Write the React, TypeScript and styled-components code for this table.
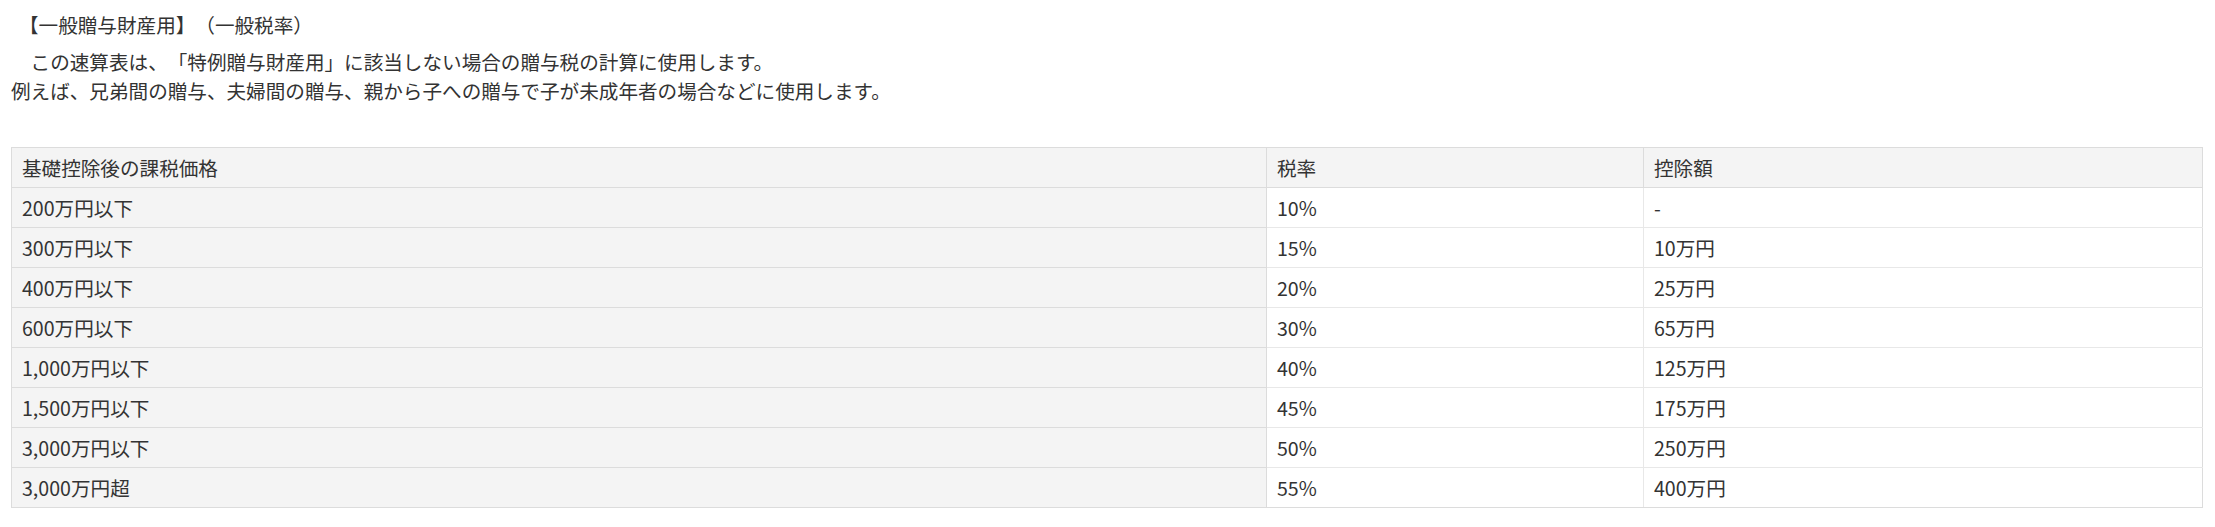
import styled, { createGlobalStyle } from "styled-components";

const GlobalStyle = createGlobalStyle`
  html, body {
    margin: 0;
    padding: 0;
    background: #ffffff;
  }
  body {
    font-family: "Noto Sans CJK JP", "Noto Sans", sans-serif;
    color: #333333;
    text-spacing-trim: space-all;
  }
`;

const Page = styled.div`
  padding: 10px 12px 0 11px;
  font-size: 19.6px;
`;

const Heading = styled.div`
  line-height: 29px;
  padding-left: 8px;
  margin-bottom: 9px;
`;

const Lead = styled.p`
  margin: 0 0 42px 0;
  line-height: 28.5px;
`;

const Table = styled.table`
  width: 100%;
  table-layout: fixed;
  border-collapse: collapse;
  font-size: 19.6px;
`;

const HeadCell = styled.th<{ $width?: string }>`
  width: ${(props) => props.$width || "auto"};
  background-color: #f4f4f4;
  border: 1px solid #dcdcdc;
  padding: 7px 10px;
  line-height: 25px;
  text-align: left;
  font-weight: 400;
  color: #333333;
`;

const Cell = styled.td`
  background-color: #ffffff;
  border: 1px solid #e8e8e8;
  padding: 7px 10px;
  line-height: 25px;
  color: #333333;

  &:last-child {
    border-right-color: #dcdcdc;
  }

  tr:last-child > & {
    border-bottom-color: #dcdcdc;
  }
`;

type Bracket = {
  price: string;
  rate: string;
  deduction: string;
};

const brackets: Bracket[] = [
  { price: "200万円以下", rate: "10%", deduction: "-" },
  { price: "300万円以下", rate: "15%", deduction: "10万円" },
  { price: "400万円以下", rate: "20%", deduction: "25万円" },
  { price: "600万円以下", rate: "30%", deduction: "65万円" },
  { price: "1,000万円以下", rate: "40%", deduction: "125万円" },
  { price: "1,500万円以下", rate: "45%", deduction: "175万円" },
  { price: "3,000万円以下", rate: "50%", deduction: "250万円" },
  { price: "3,000万円超", rate: "55%", deduction: "400万円" },
];

const App = () => {
  return (
    <>
      <GlobalStyle />
      <Page>
        <Heading>【一般贈与財産用】（一般税率）</Heading>
        <Lead>
          {"\u3000"}この速算表は、「特例贈与財産用」に該当しない場合の贈与税の計算に使用します。
          <br />
          例えば、兄弟間の贈与、夫婦間の贈与、親から子への贈与で子が未成年者の場合などに使用します。
        </Lead>
        <Table>
          <thead>
            <tr>
              <HeadCell $width="1234px">基礎控除後の課税価格</HeadCell>
              <HeadCell $width="356px">税率</HeadCell>
              <HeadCell>控除額</HeadCell>
            </tr>
          </thead>
          <tbody>
            {brackets.map((b) => (
              <tr key={b.price}>
                <HeadCell as="td">{b.price}</HeadCell>
                <Cell>{b.rate}</Cell>
                <Cell>{b.deduction}</Cell>
              </tr>
            ))}
          </tbody>
        </Table>
      </Page>
    </>
  );
};

export default App;
